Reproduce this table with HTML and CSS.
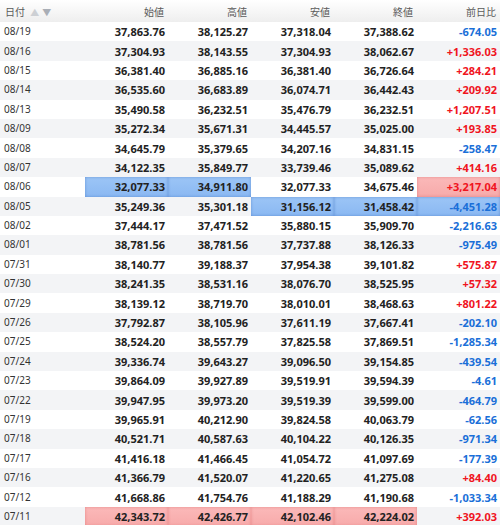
FILE: index.html
```html
<!DOCTYPE html>
<html lang="ja">
<head>
<meta charset="utf-8">
<link rel="stylesheet" href="styles.css">
</head>
<body>
<table class="grid">
<colgroup><col class="c-date"><col class="c-num"><col class="c-num"><col class="c-num"><col class="c-num"><col class="c-num"></colgroup>
<thead>
<tr><th class="h-date">日付 <span class="sort"><span class="up">▲</span><span class="down">▼</span></span></th><th>始値</th><th>高値</th><th>安値</th><th>終値</th><th>前日比</th></tr>
</thead>
<tbody>
<tr><td>08/19</td><td>37,863.76</td><td>38,125.27</td><td>37,318.04</td><td>37,388.62</td><td class="neg">-674.05</td></tr>
<tr><td>08/16</td><td>37,304.93</td><td>38,143.55</td><td>37,304.93</td><td>38,062.67</td><td class="pos">+1,336.03</td></tr>
<tr><td>08/15</td><td>36,381.40</td><td>36,885.16</td><td>36,381.40</td><td>36,726.64</td><td class="pos">+284.21</td></tr>
<tr><td>08/14</td><td>36,535.60</td><td>36,683.89</td><td>36,074.71</td><td>36,442.43</td><td class="pos">+209.92</td></tr>
<tr><td>08/13</td><td>35,490.58</td><td>36,232.51</td><td>35,476.79</td><td>36,232.51</td><td class="pos">+1,207.51</td></tr>
<tr><td>08/09</td><td>35,272.34</td><td>35,671.31</td><td>34,445.57</td><td>35,025.00</td><td class="pos">+193.85</td></tr>
<tr><td>08/08</td><td>34,645.79</td><td>35,379.65</td><td>34,207.16</td><td>34,831.15</td><td class="neg">-258.47</td></tr>
<tr><td>08/07</td><td>34,122.35</td><td>35,849.77</td><td>33,739.46</td><td>35,089.62</td><td class="pos">+414.16</td></tr>
<tr><td>08/06</td><td class="hl-blue">32,077.33</td><td class="hl-blue">34,911.80</td><td>32,077.33</td><td>34,675.46</td><td class="pos hl-red">+3,217.04</td></tr>
<tr><td>08/05</td><td>35,249.36</td><td>35,301.18</td><td class="hl-blue">31,156.12</td><td class="hl-blue">31,458.42</td><td class="neg hl-blue">-4,451.28</td></tr>
<tr><td>08/02</td><td>37,444.17</td><td>37,471.52</td><td>35,880.15</td><td>35,909.70</td><td class="neg">-2,216.63</td></tr>
<tr><td>08/01</td><td>38,781.56</td><td>38,781.56</td><td>37,737.88</td><td>38,126.33</td><td class="neg">-975.49</td></tr>
<tr><td>07/31</td><td>38,140.77</td><td>39,188.37</td><td>37,954.38</td><td>39,101.82</td><td class="pos">+575.87</td></tr>
<tr><td>07/30</td><td>38,241.35</td><td>38,531.16</td><td>38,076.70</td><td>38,525.95</td><td class="pos">+57.32</td></tr>
<tr><td>07/29</td><td>38,139.12</td><td>38,719.70</td><td>38,010.01</td><td>38,468.63</td><td class="pos">+801.22</td></tr>
<tr><td>07/26</td><td>37,792.87</td><td>38,105.96</td><td>37,611.19</td><td>37,667.41</td><td class="neg">-202.10</td></tr>
<tr><td>07/25</td><td>38,524.20</td><td>38,557.79</td><td>37,825.58</td><td>37,869.51</td><td class="neg">-1,285.34</td></tr>
<tr><td>07/24</td><td>39,336.74</td><td>39,643.27</td><td>39,096.50</td><td>39,154.85</td><td class="neg">-439.54</td></tr>
<tr><td>07/23</td><td>39,864.09</td><td>39,927.89</td><td>39,519.91</td><td>39,594.39</td><td class="neg">-4.61</td></tr>
<tr><td>07/22</td><td>39,947.95</td><td>39,973.20</td><td>39,519.39</td><td>39,599.00</td><td class="neg">-464.79</td></tr>
<tr><td>07/19</td><td>39,965.91</td><td>40,212.90</td><td>39,824.58</td><td>40,063.79</td><td class="neg">-62.56</td></tr>
<tr><td>07/18</td><td>40,521.71</td><td>40,587.63</td><td>40,104.22</td><td>40,126.35</td><td class="neg">-971.34</td></tr>
<tr><td>07/17</td><td>41,416.18</td><td>41,466.45</td><td>41,054.72</td><td>41,097.69</td><td class="neg">-177.39</td></tr>
<tr><td>07/16</td><td>41,366.79</td><td>41,520.07</td><td>41,220.65</td><td>41,275.08</td><td class="pos">+84.40</td></tr>
<tr><td>07/12</td><td>41,668.86</td><td>41,754.76</td><td>41,188.29</td><td>41,190.68</td><td class="neg">-1,033.34</td></tr>
<tr><td>07/11</td><td class="hl-red">42,343.72</td><td class="hl-red">42,426.77</td><td class="hl-red">42,102.46</td><td class="hl-red">42,224.02</td><td class="pos">+392.03</td></tr>
</tbody>
</table>
</body>
</html>
```

FILE: styles.css
```css
html, body {
  margin: 0;
  padding: 0;
  background: #fff;
}

.grid {
  width: 500px;
  table-layout: fixed;
  border-collapse: collapse;
  font-family: "Noto Sans", "Noto Sans CJK JP", sans-serif;
}

.c-date { width: 85px; }
.c-num { width: 83px; }

.grid thead th {
  height: 22px;
  padding: 0 4px 0 0;
  font-size: 10px;
  font-weight: normal;
  color: #5a5a5a;
  text-align: right;
  background: linear-gradient(#ffffff, #eeeeee);
  font-family: "Noto Sans CJK JP", sans-serif;
}

.grid thead th.h-date {
  text-align: left;
  padding-left: 5px;
}

.sort {
  font-size: 9px;
  margin-left: 3px;
}

.sort .up {
  color: #cdd0d4;
  margin-right: 3px;
}

.sort .down {
  color: #a9aeb6;
}

.grid tbody td {
  height: 19.4px;
  padding: 0 3px 0 0;
  font-size: 11px;
  font-weight: bold;
  color: #222;
  text-align: right;
  line-height: 19px;
  white-space: nowrap;
}

.grid tbody td:first-child {
  text-align: left;
  padding-left: 4px;
  font-weight: normal;
  font-size: 10px;
  color: #333;
}

.grid tbody tr:nth-child(even) td {
  background: #f3f4f6;
}

.grid tbody td.pos { color: #f0141e; }
.grid tbody td.neg { color: #1a6fd8; }

.grid tbody tr td.hl-blue {
  background: linear-gradient(#9cc5f6, #8ab8f2);
  box-shadow: inset 0 0 3px rgba(60, 110, 190, 0.55);
}

.grid tbody tr td.hl-red {
  background: linear-gradient(#fbb9b9, #f7aaaa);
  box-shadow: inset 0 0 3px rgba(210, 90, 90, 0.5);
}
```
